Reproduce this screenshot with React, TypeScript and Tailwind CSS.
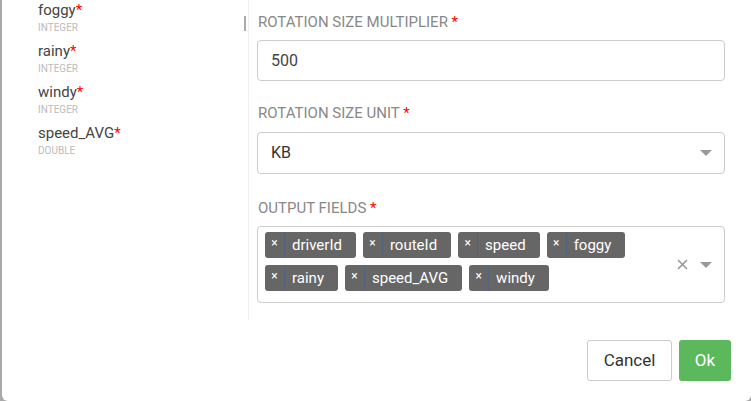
import React from 'react';

type Field = { name: string; type: string };

const fields: Field[] = [
  { name: 'foggy', type: 'INTEGER' },
  { name: 'rainy', type: 'INTEGER' },
  { name: 'windy', type: 'INTEGER' },
  { name: 'speed_AVG', type: 'DOUBLE' },
];

const rowOne = ['driverId', 'routeId', 'speed', 'foggy'];
const rowTwo = ['rainy', 'speed_AVG', 'windy'];

function Caret() {
  return (
    <svg width="12" height="6" viewBox="0 0 12 6" className="shrink-0">
      <path d="M0 0 L12 0 L6 6 Z" fill="#999" />
    </svg>
  );
}

function Tag({ label }: { label: string }) {
  return (
    <div className="flex h-[26px] items-stretch rounded-[3px] bg-[#666] text-white">
      <span className="flex w-[20px] justify-center border-r border-[#52637d] pt-[5px] text-[12px] leading-[12px]">×</span>
      <span className="flex items-center pl-[7px] pr-[14px] text-[15px]">{label}</span>
    </div>
  );
}

function Label({ text }: { text: string }) {
  return (
    <div className="pl-[1px] text-[15px] leading-[20px] text-[#888]">
      {text} <span className="text-[#f00]">*</span>
    </div>
  );
}

export default function App() {
  return (
    <div className="h-[401px] w-[751px] overflow-hidden bg-[#a9a9a9] font-['Roboto',sans-serif]">
      <div className="ml-[2px] flex h-full flex-col rounded-b-[6px] bg-white">
        <div className="flex">
          {/* Field list */}
          <div className="relative h-[320px] w-[247px] shrink-0 border-r border-[#f1f1f1] pl-[36px] pt-[2px]">
            <div className="absolute left-[242px] top-[16px] h-[15px] w-[2px] bg-[#aaa]" />
            {fields.map((f) => (
              <div key={f.name} className="mb-[10px]">
                <div className="text-[15px] leading-[17px] text-[#444]">
                  {f.name}
                  <span className="text-[#f00]">*</span>
                </div>
                <div className="mt-[3px] text-[10px] leading-[11px] text-[#bbb]">{f.type}</div>
              </div>
            ))}
          </div>

          {/* Form */}
          <div className="w-[476px] pl-[8px] pt-[12px]">
            <Label text="ROTATION SIZE MULTIPLIER" />
            <div className="mt-[8px] flex h-[41px] items-center rounded-[4px] border border-[#ccc] px-[13px] text-[16px] text-[#444]">
              500
            </div>

            <div className="mt-[22px]">
              <Label text="ROTATION SIZE UNIT" />
            </div>
            <div className="mt-[9px] flex h-[42px] items-center justify-between rounded-[4px] border border-[#ccc] pl-[13px] pr-[12px] text-[16px] text-[#333]">
              <span>KB</span>
              <Caret />
            </div>

            <div className="mt-[24px]">
              <Label text="OUTPUT FIELDS" />
            </div>
            <div className="mt-[8px] flex h-[77px] items-center rounded-[4px] border border-[#ccc] pl-[7px] pr-[12px]">
              <div className="flex flex-1 flex-col gap-y-[7px] self-start pt-[5px]">
                <div className="flex gap-x-[7px]">
                  {rowOne.map((t) => (
                    <Tag key={t} label={t} />
                  ))}
                </div>
                <div className="flex gap-x-[7px]">
                  {rowTwo.map((t) => (
                    <Tag key={t} label={t} />
                  ))}
                </div>
              </div>
              <div className="flex items-center gap-[11px]">
                <svg width="13" height="13" viewBox="0 0 13 13">
                  <path d="M2 2 L11 11 M11 2 L2 11" stroke="#999" strokeWidth="1.6" />
                </svg>
                <Caret />
              </div>
            </div>
          </div>
        </div>

        {/* Footer */}
        <div className="flex justify-end gap-[7px] pr-[20px] pt-[20px]">
          <button className="h-[41px] w-[85px] rounded-[3px] border border-[#ccc] bg-white text-[17px] text-[#333]">
            Cancel
          </button>
          <button className="h-[41px] w-[52px] rounded-[3px] bg-[#5cb85c] text-[17px] text-white">Ok</button>
        </div>
      </div>
    </div>
  );
}
